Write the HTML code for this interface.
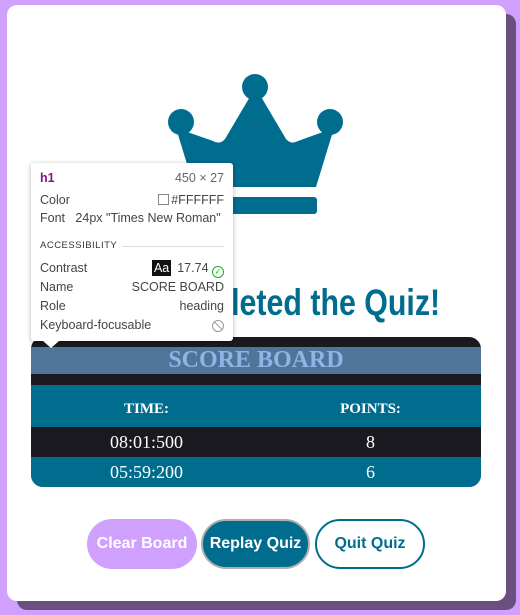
<!DOCTYPE html>
<html><head><style>
html,body{margin:0;padding:0;}
body{width:520px;height:615px;background:#d0a0fe;position:relative;overflow:hidden;font-family:"Liberation Sans",sans-serif;}
.shadow{position:absolute;left:17px;top:14px;width:499px;height:596px;background:#6a4f80;border-radius:10px;}
.card{position:absolute;left:7px;top:5px;width:499px;height:596px;background:#fff;border-radius:10px;}
.title{position:absolute;right:80px;top:282px;font-size:37px;font-weight:bold;color:#006d8f;white-space:nowrap;transform:scaleX(0.82);transform-origin:right center;}
.table{position:absolute;left:31px;top:337px;width:450px;height:150px;background:#19191f;border-radius:12px;overflow:hidden;font-family:"Liberation Serif",serif;color:#fff;}
.h1{position:absolute;left:0;top:10px;width:450px;height:27px;background:#4f7599;color:#8fb4e6;font-size:24px;font-weight:bold;text-align:center;line-height:27px;}
.row{position:absolute;left:0;width:450px;}
.c{position:absolute;width:225px;text-align:center;}
.btn{position:absolute;top:519px;height:50px;border-radius:25px;font-weight:bold;font-size:16px;text-align:center;line-height:50px;box-sizing:border-box;}
.tip{position:absolute;left:31px;top:163px;width:202px;height:178px;background:#fff;border-radius:3px;box-shadow:0 1px 5px rgba(0,0,0,0.3);font-family:"Liberation Sans",sans-serif;font-size:12.5px;color:#444;}
.tip .r{position:absolute;left:9px;right:9px;white-space:nowrap;}
.tip .v{position:absolute;right:0;top:0;}
</style></head><body>
<div class="shadow"></div>
<div class="card"></div>
<svg style="position:absolute;left:0;top:0" width="520" height="615">
<g fill="#006d8f">
<circle cx="255" cy="87" r="13"/>
<circle cx="181" cy="122" r="13"/>
<circle cx="330" cy="122" r="13"/>
<path d="M176 128 L194 187 L316 187 L334 128 L298 141 Q291 145 286 139 L260 95 L251 95 L225 139 Q220 145 213 141 Z"/>
<rect x="193" y="197" width="124" height="17" rx="3"/>
</g>
</svg>
<div class="title">You Completed the Quiz!</div>
<div class="table">
<div class="h1">SCORE BOARD</div>
<div class="row" style="top:48px;height:42px;background:#006d8f;font-weight:bold;font-size:15px;"><div class="c" style="left:3px;top:16px">TIME:</div><div class="c" style="left:227px;top:16px">POINTS:</div></div>
<div class="row" style="top:90px;height:30px;font-size:18px;"><div class="c" style="left:3px;top:5px">08:01:500</div><div class="c" style="left:227px;top:5px">8</div></div>
<div class="row" style="top:120px;height:30px;background:#006d8f;font-size:18px;"><div class="c" style="left:3px;top:5px">05:59:200</div><div class="c" style="left:227px;top:5px">6</div></div>
</div>
<div class="btn" style="left:87px;width:110px;background:#d0a0fe;color:#fff;">Clear Board</div>
<div class="btn" style="left:201px;width:109px;background:#006d8f;color:#fff;border:2px solid #b0b0b0;line-height:46px;">Replay Quiz</div>
<div class="btn" style="left:315px;width:110px;background:#fff;color:#006d8f;border:2px solid #006d8f;line-height:46px;">Quit Quiz</div>
<div class="tip">
<div class="r" style="top:8px"><span style="color:#881280;font-weight:bold">h1</span><span class="v" style="color:#666">450 × 27</span></div>
<div class="r" style="top:30px">Color<span class="v"><span style="display:inline-block;width:9px;height:9px;border:1px solid #888;vertical-align:-1px;margin-right:2px"></span>#FFFFFF</span></div>
<div class="r" style="top:48px">Font&nbsp;&nbsp;&nbsp;24px "Times New Roman"</div>
<div class="r" style="top:77px;font-size:9.5px;letter-spacing:0.5px;color:#333">ACCESSIBILITY<span style="position:absolute;left:82px;right:0;top:6px;border-top:1px solid #ddd"></span></div>
<div class="r" style="top:98px">Contrast<span class="v"><span style="background:#111;color:#fff;padding:1px 2px;margin-right:6px">Aa</span>17.74 <span style="color:#2a2;display:inline-block;width:10px;height:10px;border:1.5px solid #2a2;border-radius:50%;font-size:8px;line-height:10px;text-align:center;vertical-align:-2px">✓</span></span></div>
<div class="r" style="top:117px">Name<span class="v">SCORE BOARD</span></div>
<div class="r" style="top:136px">Role<span class="v">heading</span></div>
<div class="r" style="top:155px">Keyboard-focusable<span class="v" style="color:#999;display:inline-block;width:10px;height:10px;border:1.5px solid #999;border-radius:50%;top:2px;overflow:hidden"><span style="position:absolute;left:-2px;top:4px;width:14px;border-top:1.5px solid #999;transform:rotate(45deg)"></span></span></div>
</div>
<div style="position:absolute;left:43px;top:341px;width:0;height:0;border-left:8px solid transparent;border-right:8px solid transparent;border-top:7px solid #fff;"></div>
</body></html>
